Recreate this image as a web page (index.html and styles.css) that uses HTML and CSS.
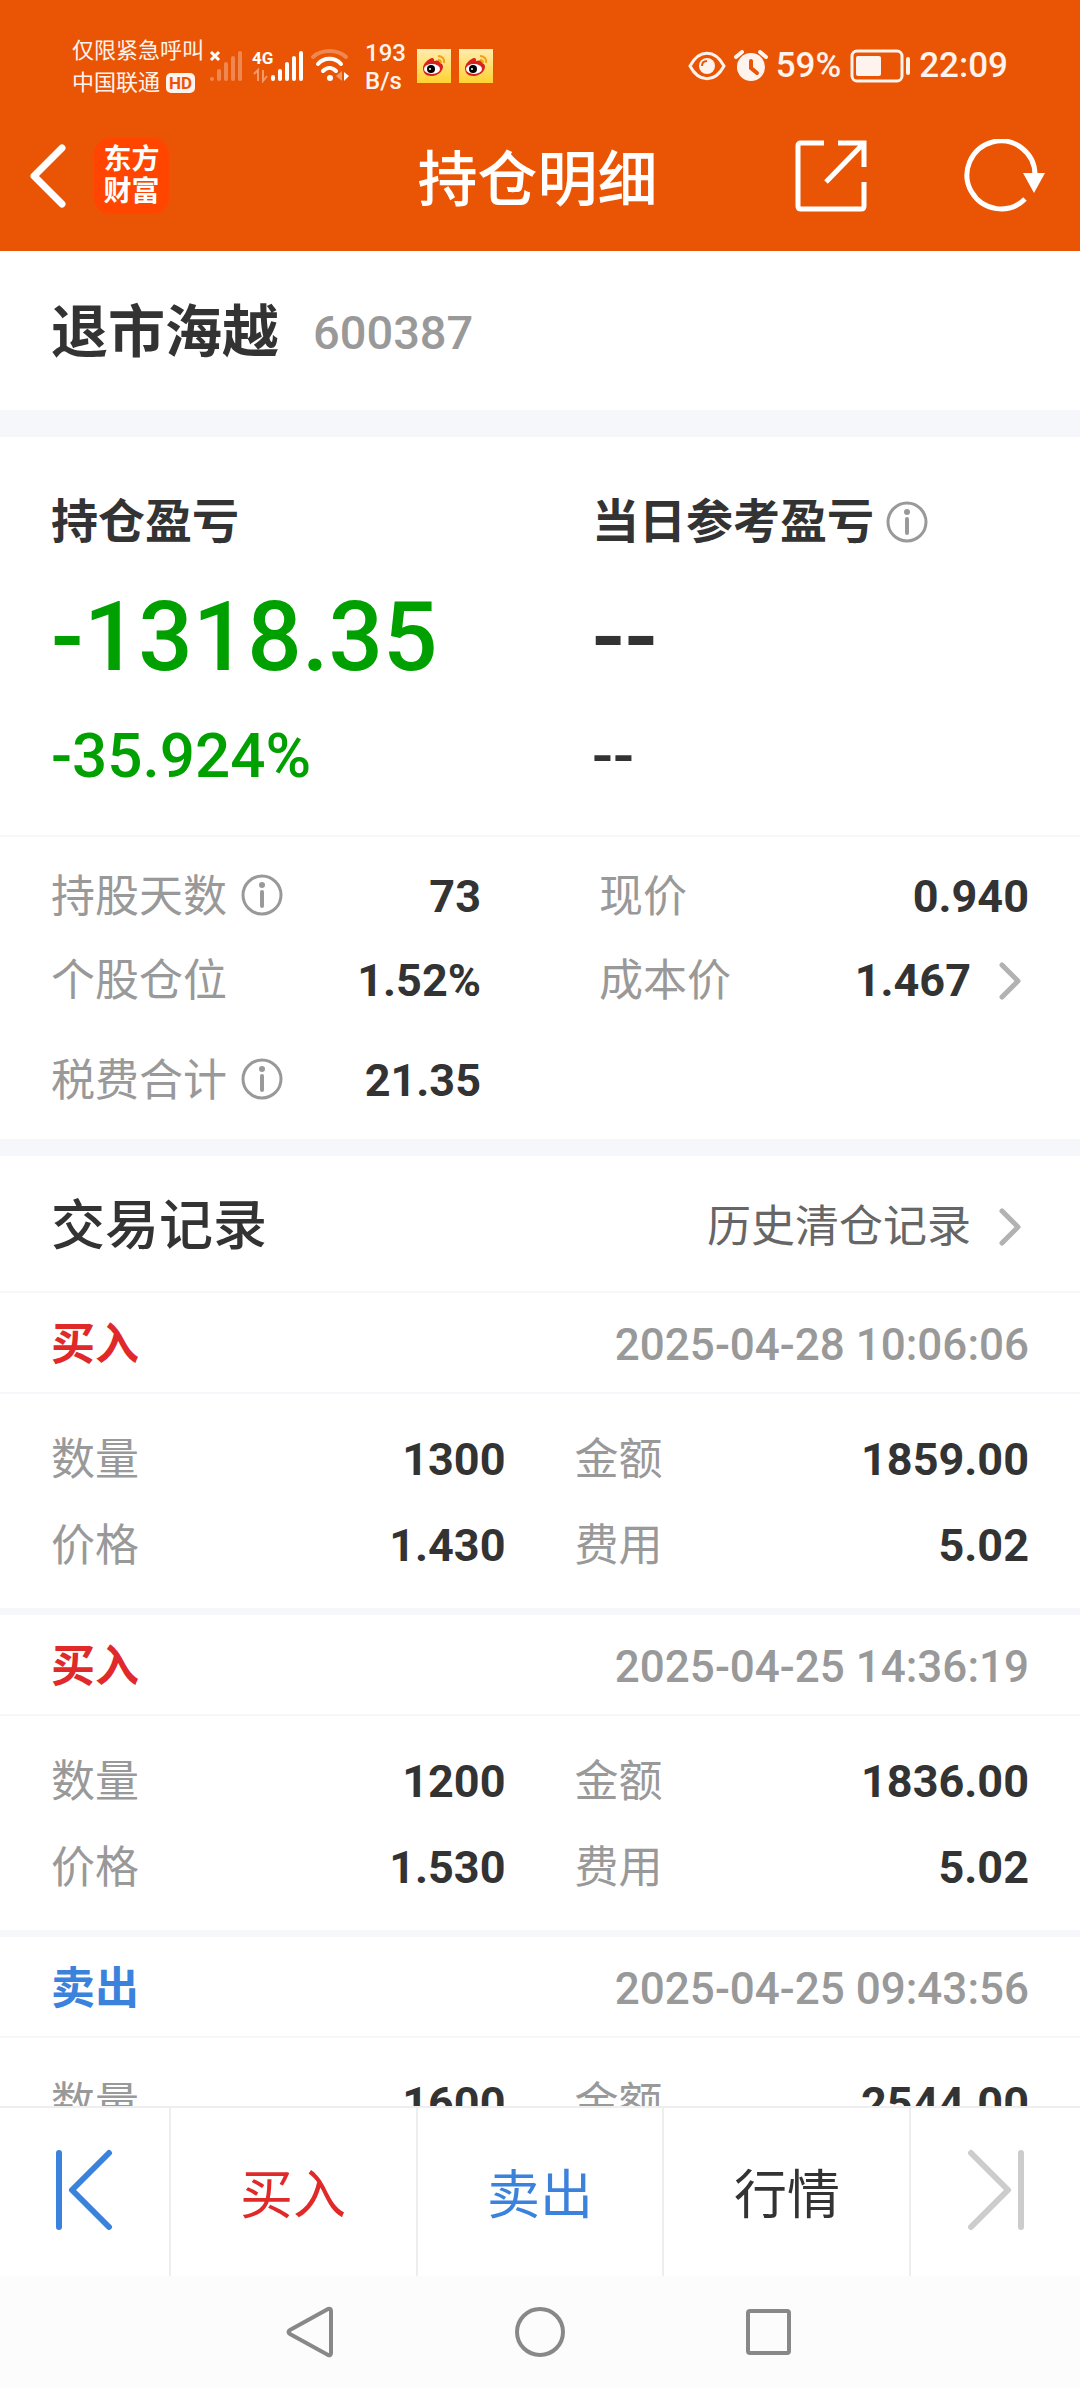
FILE: index.html
```html
<!DOCTYPE html>
<html lang="zh-CN">

<head>
  <meta charset="utf-8">
  <meta name="viewport" content="width=device-width, initial-scale=1">
  <title>持仓明细</title>
  <link rel="stylesheet" href="styles.css">
</head>

<body>
  <!-- Shared icons -->
  <svg width="0" height="0" class="sprite">
    <symbol id="info" viewBox="0 0 42 42">
      <circle cx="21" cy="21" r="19" fill="none" stroke="#999" stroke-width="3"/>
      <circle cx="21" cy="11" r="3" fill="#999"/>
      <path d="M21 18v14" stroke="#999" stroke-width="4" stroke-linecap="round"/>
    </symbol>
    <symbol id="chevron" viewBox="0 0 22 38">
      <path d="M3 3l16 16L3 35" fill="none" stroke="#b2b2b2" stroke-width="5" stroke-linecap="round" stroke-linejoin="round"/>
    </symbol>
    <symbol id="weibo" viewBox="0 0 34 34">
      <linearGradient id="weiboBg" x1="0" y1="0" x2="0" y2="1">
        <stop offset="0" stop-color="#ffecb0"/>
        <stop offset="1" stop-color="#ffd230"/>
      </linearGradient>
      <path d="M0 0h34v34H0z" fill="url(#weiboBg)"/>
      <path d="M6 19c0-4 5-9 9-10 2 0 2 1 2 3 3-1 6-1 6 2 3 1 4 4 2 7-2 4-7 6-11 6-5 0-8-3-8-8z" fill="#d8201e"/>
      <ellipse cx="15" cy="20" rx="8" ry="5" fill="#fff"/>
      <circle cx="14" cy="20" r="4" fill="#000"/>
      <circle cx="13" cy="20" r="1" fill="#fff"/>
      <path d="M21 7c4 0 7 3 6 7M21 11c2 0 3 1 3 3" fill="none" stroke="#f2a01c" stroke-width="2"/>
    </symbol>
  </svg>

  <header class="header">
    <div class="status-bar">
      <div class="carrier">
        <span>仅限紧急呼叫</span>
        <span class="carrier-name">中国联通<b class="hd">HD</b></span>
      </div>
      <svg class="signals" width="142" height="34" viewBox="0 0 142 34">
        <path d="M2 3l8 8M10 3l-8 8" stroke="#fff" stroke-width="3"/>
        <g stroke="#fff" stroke-width="4" stroke-linecap="round">
          <path d="M3 30v0M10 22v8M17 15v15M24 9v21M31 4v26" opacity=".3"/>
          <path d="M64 28v2M71 22v8M78 15v15M85 9v21M92 4v26"/>
        </g>
        <text x="43" y="15" class="net-type">4G</text>
        <path d="M45 25l4-4v11M54 21v11l4-5" fill="none" stroke="#fff" stroke-width="2" opacity=".4"/>
        <g fill="none" stroke="#fff" stroke-width="4" stroke-linecap="round">
          <path d="M104 8c9-8 24-8 33 0" opacity=".3"/>
          <path d="M109 15c6-7 17-7 23 0M114 22c4-4 9-4 13 0"/>
        </g>
        <circle cx="121" cy="29" r="3" fill="#fff"/>
        <path d="M133 22v10l-6-5z" fill="#fff" opacity=".4"/>
        <path d="M135 23l5 4-5 5z" fill="#fff"/>
      </svg>
      <div class="speed"><span>193</span><span>B/s</span></div>
      <svg class="weibo" width="34" height="34"><use href="#weibo"/></svg>
      <svg class="weibo" width="34" height="34"><use href="#weibo"/></svg>
      <div class="status-right">
        <svg width="38" height="30" viewBox="0 0 38 30">
          <path d="M2 15C11-2 27-2 36 15 27 32 11 32 2 15z" fill="none" stroke="#fff3ee" stroke-width="3"/>
          <circle cx="19" cy="15" r="8" fill="#fff3ee"/>
          <path d="M14 15c0-3 2-5 5-5" fill="none" stroke="#e95504" stroke-width="2"/>
        </svg>
        <svg width="34" height="32" viewBox="0 0 34 32">
          <circle cx="17" cy="17" r="14" fill="#fff3ee"/>
          <path d="M2 7l6-5M32 7l-6-5" stroke="#fff3ee" stroke-width="4" stroke-linecap="round"/>
          <path d="M17 11v7l6 5" fill="none" stroke="#e95504" stroke-width="4" stroke-linecap="round"/>
        </svg>
        <span>59%</span>
        <svg width="62" height="34" viewBox="0 0 62 34">
          <rect x="3" y="2" width="50" height="30" rx="5" fill="none" stroke="#fff3ee" stroke-width="3"/>
          <rect x="7" y="7" width="25" height="20" rx="2" fill="#fff3ee"/>
          <path d="M59 10v14" stroke="#fff3ee" stroke-width="4" stroke-linecap="round"/>
        </svg>
        <span>22:09</span>
      </div>
    </div>

    <div class="app-bar">
      <div class="app-bar-side">
        <button class="icon-btn" aria-label="返回">
          <svg width="38" height="64" viewBox="0 0 38 64">
            <path d="M33 4L5 32l28 28" fill="none" stroke="#fff" stroke-width="7" stroke-linecap="round" stroke-linejoin="round"/>
          </svg>
        </button>
        <div class="logo">东方<br>财富</div>
      </div>
      <h1 class="app-title">持仓明细</h1>
      <div class="app-bar-side app-bar-actions">
        <button class="icon-btn" aria-label="分享">
          <svg width="72" height="72" viewBox="0 0 72 72">
            <path d="M29 3H6Q3 3 3 6v60q0 3 3 3h60q3 0 3-3V42M43 3h26v24M68 4L31 42" fill="none" stroke="#fff" stroke-width="5"/>
          </svg>
        </button>
        <button class="icon-btn" aria-label="刷新">
          <svg width="82" height="74" viewBox="0 0 82 74">
            <path d="M61 60A34 34 0 1 1 71 36" fill="none" stroke="#fff" stroke-width="5"/>
            <path d="M59 34h22L70 54z" fill="#fff"/>
          </svg>
        </button>
      </div>
    </div>
  </header>

  <main class="content">
    <section class="stock">
      <h2 class="stock-name">退市海越</h2>
      <span class="stock-code">600387</span>
    </section>

    <section class="profit">
      <div>
        <div class="profit-label">持仓盈亏</div>
        <div class="profit-value down">-1318.35</div>
        <div class="profit-rate down">-35.924%</div>
      </div>
      <div>
        <div class="profit-label">当日参考盈亏
          <button class="icon-btn" aria-label="说明"><svg width="42" height="42"><use href="#info"/></svg></button>
        </div>
        <div class="profit-value">--</div>
        <div class="profit-rate">--</div>
      </div>
    </section>

    <section class="stats">
      <div class="field">
        <span class="label">持股天数</span>
        <button class="icon-btn" aria-label="说明"><svg width="42" height="42"><use href="#info"/></svg></button>
        <span class="value">73</span>
      </div>
      <div class="field">
        <span class="label">现价</span>
        <span class="value">0.940</span>
      </div>
      <div class="field">
        <span class="label">个股仓位</span>
        <span class="value">1.52%</span>
      </div>
      <a class="field" href="#cost">
        <span class="label">成本价</span>
        <span class="value">1.467</span>
        <svg class="chevron" width="22" height="38"><use href="#chevron"/></svg>
      </a>
      <div class="field">
        <span class="label">税费合计</span>
        <button class="icon-btn" aria-label="说明"><svg width="42" height="42"><use href="#info"/></svg></button>
        <span class="value">21.35</span>
      </div>
    </section>

    <section class="records">
      <div class="records-head">
        <h2 class="records-title">交易记录</h2>
        <a class="history" href="#history">历史清仓记录
          <svg class="chevron" width="22" height="38"><use href="#chevron"/></svg>
        </a>
      </div>

      <article class="record">
        <div class="record-head">
          <span class="side buy">买入</span>
          <time class="time">2025-04-28 10:06:06</time>
        </div>
        <div class="record-body">
          <div class="field"><span class="label">数量</span><span class="value">1300</span></div>
          <div class="field"><span class="label">金额</span><span class="value">1859.00</span></div>
          <div class="field"><span class="label">价格</span><span class="value">1.430</span></div>
          <div class="field"><span class="label">费用</span><span class="value">5.02</span></div>
        </div>
      </article>

      <article class="record">
        <div class="record-head">
          <span class="side buy">买入</span>
          <time class="time">2025-04-25 14:36:19</time>
        </div>
        <div class="record-body">
          <div class="field"><span class="label">数量</span><span class="value">1200</span></div>
          <div class="field"><span class="label">金额</span><span class="value">1836.00</span></div>
          <div class="field"><span class="label">价格</span><span class="value">1.530</span></div>
          <div class="field"><span class="label">费用</span><span class="value">5.02</span></div>
        </div>
      </article>

      <article class="record">
        <div class="record-head">
          <span class="side sell">卖出</span>
          <time class="time">2025-04-25 09:43:56</time>
        </div>
        <div class="record-body">
          <div class="field"><span class="label">数量</span><span class="value">1600</span></div>
          <div class="field"><span class="label">金额</span><span class="value">2544.00</span></div>
        </div>
      </article>
    </section>
  </main>

  <footer>
    <nav class="tabs">
      <button class="tab tab-end" aria-label="上一只">
        <svg width="58" height="82" viewBox="0 0 58 82">
          <path d="M4 4v74M54 4L17 41l37 37" fill="none" stroke="#3b82dc" stroke-width="6" stroke-linecap="round" stroke-linejoin="round"/>
        </svg>
      </button>
      <button class="tab buy">买入</button>
      <button class="tab sell">卖出</button>
      <button class="tab">行情</button>
      <button class="tab tab-end" aria-label="下一只">
        <svg width="58" height="82" viewBox="0 0 58 82">
          <path d="M54 4v74M4 4l37 37L4 78" fill="none" stroke="#ccc" stroke-width="6" stroke-linecap="round" stroke-linejoin="round"/>
        </svg>
      </button>
    </nav>
    <!-- System navigation -->
    <div class="sys-nav">
      <svg width="52" height="52" viewBox="0 0 52 52">
        <path d="M43 3L5 24q-3 2 0 4l38 21q3 1 3-2V5q0-3-3-2z" fill="none" stroke="#888" stroke-width="4"/>
      </svg>
      <svg width="52" height="52" viewBox="0 0 52 52">
        <circle cx="26" cy="26" r="23" fill="none" stroke="#888" stroke-width="4"/>
      </svg>
      <svg width="52" height="52" viewBox="0 0 52 52">
        <rect x="5" y="5" width="41" height="42" rx="2" fill="none" stroke="#888" stroke-width="4"/>
      </svg>
    </div>
  </footer>
</body>

</html>
```

FILE: styles.css
```css
* {
  box-sizing: border-box;
}

body {
  margin: 0;
  height: 100vh;
  display: flex;
  flex-direction: column;
  background: #fff;
  color: #333;
  font-family: Roboto, "Noto Sans CJK SC", sans-serif;
  font-size: 44px;
  line-height: 60px;
}

h1, h2 {
  margin: 0;
}

a {
  color: inherit;
  text-decoration: none;
}

button {
  padding: 0;
  border: 0;
  background: none;
  color: inherit;
  font: inherit;
}

svg {
  display: block;
  flex: none;
}

.sprite {
  position: absolute;
}

.icon-btn {
  flex: none;
}

/* Header */
.header {
  padding-bottom: 31px;
  background: #e95504;
  color: #fff;
}

.status-bar {
  display: flex;
  align-items: center;
  height: 132px;
  padding: 0 72px;
  color: #fff3ee;
}

.carrier {
  width: 137px;
  padding-top: 2px;
  font-size: 22px;
  line-height: 32px;
  white-space: nowrap;
}

.carrier span {
  display: block;
}

.carrier .carrier-name {
  display: flex;
  align-items: center;
  gap: 6px;
}

.hd {
  padding: 0 3px;
  border-radius: 5px;
  background: #fff3ee;
  color: #e95504;
  font-size: 17px;
  line-height: 20px;
}

.net-type {
  fill: #fff;
  font-size: 17px;
  font-weight: 700;
}

.speed {
  width: 52px;
  margin-left: 14px;
  padding-top: 2px;
  font-size: 24px;
  font-weight: 500;
  line-height: 28px;
}

.speed span {
  display: block;
}

.weibo {
  margin-right: 8px;
}

.status-right {
  display: flex;
  align-items: center;
  gap: 8px;
  margin-left: auto;
  font-size: 35px;
  font-weight: 500;
}

.app-bar {
  display: flex;
  align-items: center;
  height: 88px;
  padding: 0 34px 0 29px;
}

.app-bar-side {
  flex: 1;
  display: flex;
  align-items: center;
  gap: 27px;
}

.app-bar-actions {
  justify-content: flex-end;
  gap: 97px;
}

.logo {
  width: 75px;
  height: 76px;
  padding-top: 6px;
  border-radius: 16px;
  background: #ff4500;
  font-size: 28px;
  font-weight: 700;
  line-height: 32px;
  text-align: center;
}

.app-title {
  padding-top: 10px;
  font-size: 60px;
  font-weight: 500;
  line-height: 78px;
}

/* Scrolling content */
.content {
  flex: 1;
  min-height: 0;
  overflow: hidden;
}

.stock {
  display: flex;
  align-items: center;
  gap: 34px;
  height: 186px;
  padding: 4px 51px 0;
  border-bottom: 27px solid #f6f7fa;
}

.stock-name {
  font-size: 57px;
  font-weight: 700;
}

.stock-code {
  color: #999;
  font-size: 47px;
  font-weight: 500;
}

.profit {
  display: grid;
  grid-template-columns: 1fr 1fr;
  column-gap: 104px;
  padding: 55px 51px 39px;
  border-bottom: 2px solid #f6f7fa;
  font-weight: 500;
}

.profit-label {
  display: flex;
  align-items: center;
  gap: 12px;
  font-size: 47px;
  font-weight: 700;
}

.profit-value {
  margin: 29px 0 23px;
  font-size: 96px;
  line-height: 112px;
}

.profit-rate {
  font-size: 62px;
  line-height: 80px;
}

.down {
  color: #00a000;
}

.field {
  display: flex;
  align-items: center;
}

.label {
  color: #999;
}

.field .icon-btn {
  margin-left: 14px;
  padding-bottom: 4px;
}

.value {
  margin-left: auto;
  font-size: 45px;
  font-weight: 700;
}

.chevron {
  margin-left: 28px;
  margin-right: 8px;
}

.stats {
  display: grid;
  grid-template-columns: 1fr 1fr;
  grid-template-rows: 84px 84px 116px;
  column-gap: 118px;
  padding: 18px 51px 0;
  border-bottom: 17px solid #f6f7fa;
}

/* Trade records */
.records-head {
  display: flex;
  align-items: center;
  justify-content: space-between;
  height: 137px;
  padding: 6px 51px 0;
  border-bottom: 2px solid #f6f7fa;
}

.records-title {
  font-size: 54px;
  font-weight: 500;
}

.history {
  display: flex;
  align-items: center;
  color: #666;
}

.record {
  border-bottom: 7px solid #f6f7fa;
}

.record-head {
  display: flex;
  align-items: center;
  justify-content: space-between;
  height: 101px;
  padding: 4px 51px 0;
  border-bottom: 2px solid #f6f7fa;
}

.side {
  font-weight: 700;
}

.time {
  color: #999;
  font-weight: 500;
}

.record-body {
  display: grid;
  grid-template-columns: 1fr 1fr;
  gap: 26px 69px;
  padding: 36px 51px 32px;
}

.buy {
  color: #e02a2a;
}

.sell {
  color: #3b82dc;
}

/* Footer */
.tabs {
  display: flex;
  height: 170px;
  border-top: 2px solid #eee;
  background: #fff;
}

.tab {
  flex: 247;
  display: flex;
  align-items: center;
  justify-content: center;
  padding-top: 8px;
  border-left: 2px solid #eee;
  font-size: 53px;
}

.tab-end {
  flex: 170;
  padding: 0 0 4px;
}

.tab:first-child {
  border-left: 0;
}

.sys-nav {
  display: flex;
  align-items: center;
  justify-content: center;
  gap: 177px;
  height: 112px;
  background: #fcfcfc;
}
```
